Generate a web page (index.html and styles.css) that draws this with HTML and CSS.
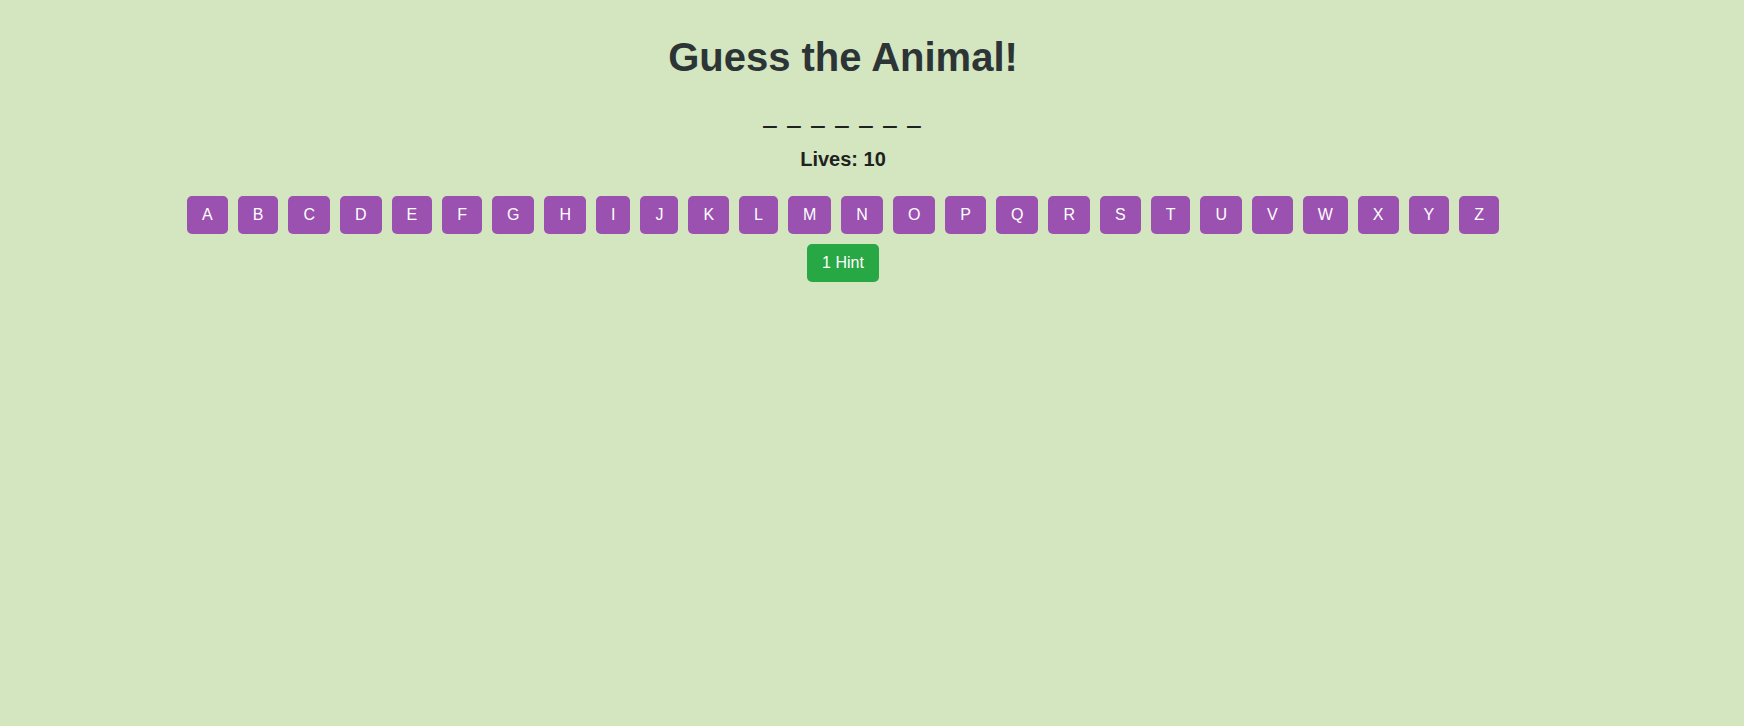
FILE: index.html
```html
<!DOCTYPE html>
<html lang="en">
<head>
<meta charset="utf-8">
<title>Guess the Animal!</title>
<link rel="stylesheet" href="styles.css">
</head>
<body>
<main class="game">
  <h1 class="title">Guess the Animal!</h1>
  <div class="word">_ _ _ _ _ _ _</div>
  <div class="lives">Lives: 10</div>
  <div class="letters">
    <button class="letter">A</button><button class="letter">B</button><button class="letter">C</button><button class="letter">D</button><button class="letter">E</button><button class="letter">F</button><button class="letter">G</button><button class="letter">H</button><button class="letter">I</button><button class="letter">J</button><button class="letter">K</button><button class="letter">L</button><button class="letter">M</button><button class="letter">N</button><button class="letter">O</button><button class="letter">P</button><button class="letter">Q</button><button class="letter">R</button><button class="letter">S</button><button class="letter">T</button><button class="letter">U</button><button class="letter">V</button><button class="letter">W</button><button class="letter">X</button><button class="letter">Y</button><button class="letter">Z</button>
  </div>
  <div class="actions">
    <button class="hint">1 Hint</button>
  </div>
</main>
</body>
</html>
```

FILE: styles.css
```css
html, body {
  margin: 0;
  background: #d3e6c0;
}

body {
  font-family: "Liberation Sans", Arial, sans-serif;
  color: #222;
  min-height: 726px;
}

.game {
  padding: 34px 58px 0 0;
  text-align: center;
}

.title {
  margin: 0;
  font-size: 40px;
  line-height: 46px;
  font-weight: bold;
  color: #2d3436;
}

.word {
  margin-top: 20px;
  font-size: 24px;
  line-height: 32px;
  font-weight: bold;
  letter-spacing: 2px;
  color: #1e221e;
  text-shadow: 0 1px 0 #1e221e;
}

.lives {
  margin-top: 16px;
  font-size: 20px;
  line-height: 23px;
  font-weight: bold;
  color: #1e221e;
}

.letters {
  margin-top: 20px;
  display: flex;
  flex-wrap: wrap;
  justify-content: center;
}

.actions {
  display: flex;
  justify-content: center;
}

.letter,
.hint {
  margin: 5px;
  padding: 10px 15px;
  border: none;
  border-radius: 5px;
  font-family: "Liberation Sans", Arial, sans-serif;
  font-size: 16px;
  line-height: 18px;
  color: #fff;
  cursor: pointer;
}

.letter {
  background: #9b51b0;
}

.hint {
  background: #28a745;
}
```
